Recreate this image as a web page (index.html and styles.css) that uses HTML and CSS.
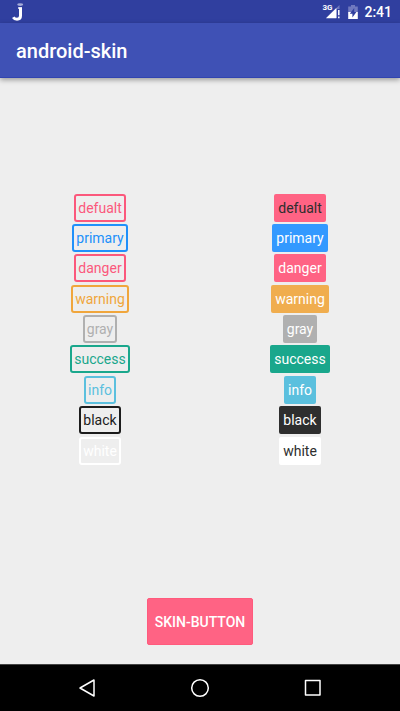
FILE: index.html
```html
<!DOCTYPE html>
<html lang="en">
<head>
<meta charset="utf-8">
<meta name="viewport" content="width=device-width, initial-scale=1">
<title>android-skin</title>
<link rel="stylesheet" href="styles.css">
</head>
<body>
<div class="status">
  <svg class="status-logo" width="12" height="18" viewBox="0 0 12 18" aria-hidden="true">
    <ellipse cx="8.2" cy="1.6" rx="3" ry="1.4" fill="#a5abd8"/>
    <path d="M8.5 4.4V12.8C8.5 15.2 7 16.2 5 16.2C3.2 16.2 2 15.6 1.2 14.2" fill="none" stroke="#fff" stroke-width="3"/>
    <path d="M6 5H10" stroke="#fff" stroke-width="1.4"/>
  </svg>
  <span class="network">3G</span>
  <svg class="signal" width="14" height="14" viewBox="0 0 14 14" aria-hidden="true">
    <path d="M13.5 0V4H11V13H0Z" fill="#7079bf"/>
    <path d="M10.3 3V13.3H0Z" fill="#fff"/>
    <path d="M12.8 5V10.3M12.8 11.5V13.3" stroke="#fff" stroke-width="1.5"/>
  </svg>
  <svg class="battery" width="10" height="14" viewBox="0 0 10 14" aria-hidden="true">
    <path d="M3 0H7V1.5H9.8V7.5H.2V1.5H3Z" fill="#7079bf"/>
    <path d="M.2 7H9.8V14H.2Z" fill="#fff"/>
    <path d="M6.2 3L1.8 8.8H4.4V12.6L8.4 7H6.2Z" fill="#303f9f"/>
  </svg>
  <time class="clock">2:41</time>
</div>
<header class="appbar"><h1>android-skin</h1></header>
<main>
  <section class="columns">
    <div class="column outlined">
      <button type="button" class="tag danger">defualt</button>
      <button type="button" class="tag primary">primary</button>
      <button type="button" class="tag danger">danger</button>
      <button type="button" class="tag warning">warning</button>
      <button type="button" class="tag gray">gray</button>
      <button type="button" class="tag success">success</button>
      <button type="button" class="tag info">info</button>
      <button type="button" class="tag black">black</button>
      <button type="button" class="tag white">white</button>
    </div>
    <div class="column filled">
      <button type="button" class="tag danger dark-text">defualt</button>
      <button type="button" class="tag primary">primary</button>
      <button type="button" class="tag danger">danger</button>
      <button type="button" class="tag warning">warning</button>
      <button type="button" class="tag gray">gray</button>
      <button type="button" class="tag success">success</button>
      <button type="button" class="tag info">info</button>
      <button type="button" class="tag black">black</button>
      <button type="button" class="tag white dark-text">white</button>
    </div>
  </section>
  <div class="action"><button type="button" class="skin-button">SKIN-BUTTON</button></div>
</main>
<nav class="navbar">
  <button type="button" aria-label="Back"><svg width="20" height="20" viewBox="0 0 20 20"><path d="M17 2V18L3 10Z"/></svg></button>
  <button type="button" aria-label="Home"><svg width="20" height="20" viewBox="0 0 20 20"><circle cx="10" cy="10" r="8.3"/></svg></button>
  <button type="button" aria-label="Recent apps"><svg width="20" height="20" viewBox="0 0 20 20"><path d="M2.5 2.5H17V17H2.5Z"/></svg></button>
</nav>
</body>
</html>
```
FILE: styles.css
```css
* {
  box-sizing: border-box;
}

body {
  margin: 0;
  min-height: 100vh;
  display: flex;
  flex-direction: column;
  background: #eee;
  font-family: Roboto, "Noto Sans", sans-serif;
}

button {
  font-family: inherit;
  margin: 0;
}

.status {
  display: flex;
  align-items: center;
  height: 23px;
  padding: 0 8px 0 12px;
  background: #303f9f;
  color: #fff;
}

.status-logo {
  margin-right: auto;
}

.network {
  align-self: flex-start;
  padding-top: 3px;
  font-size: 8px;
  line-height: 10px;
  font-weight: 700;
}

.signal {
  margin-left: -6px;
}

.battery {
  margin: 0 6px 0 8px;
}

.clock {
  padding-top: 2px;
  font-size: 14px;
  line-height: 23px;
  font-weight: 500;
}

.appbar {
  display: flex;
  align-items: center;
  height: 55px;
  padding: 2px 16px 0;
  background: #3f51b5;
  color: #fff;
  border-bottom: 1px solid #3144b0;
  box-shadow: 0 2px 5px rgba(0, 0, 0, 0.35);
}

.appbar h1 {
  margin: 0;
  font-size: 20px;
  line-height: 24px;
  font-weight: 500;
}

main {
  flex: 1;
  display: flex;
  flex-direction: column;
}

.columns {
  flex: 1;
  display: grid;
  grid-template-columns: 1fr 1fr;
  align-content: center;
}

.column {
  display: flex;
  flex-direction: column;
  align-items: center;
  justify-content: space-between;
  min-height: 271px;
}

.tag {
  height: 28px;
  padding: 0 2px;
  border: 2px solid var(--tone);
  border-radius: 3px;
  font-size: 14px;
  line-height: 24px;
}

.outlined .tag {
  background: transparent;
  color: var(--tone);
}

.filled .tag {
  background: var(--tone);
  color: #fff;
  border-radius: 2px;
}

.tag.danger { --tone: #ff6384; }
.tag.primary { --tone: #3399ff; }
.tag.warning { --tone: #f0ad4e; }
.tag.gray { --tone: #b0b0b0; }
.tag.success { --tone: #1aa78c; }
.tag.info { --tone: #5bc0de; }
.tag.black { --tone: #2e2e2e; }
.tag.white { --tone: #fff; }

.outlined .danger { --tone: #fb587c; }
.outlined .primary { --tone: #2090fa; }
.outlined .warning { --tone: #f0a63c; }
.outlined .black { --tone: #1c1c1c; }

.filled .dark-text {
  color: #2e2e2e;
}

.action {
  display: flex;
  justify-content: center;
  padding: 18px 0 19px;
}

.skin-button {
  height: 47px;
  padding: 0 7px;
  border: 1px solid #ff5a7c;
  border-radius: 2px;
  background: #ff6384;
  color: #fff;
  font-size: 14px;
  font-weight: 500;
}

.navbar {
  display: grid;
  grid-template-columns: repeat(3, 1fr);
  height: 47px;
  padding: 0 31px;
  background: #000;
  border-top: 1px solid #444;
}

.navbar button {
  display: flex;
  align-items: center;
  justify-content: center;
  padding: 0;
  border: 0;
  background: none;
}

.navbar svg {
  fill: none;
  stroke: #fff;
  stroke-width: 1.5;
  stroke-linejoin: round;
}
```
